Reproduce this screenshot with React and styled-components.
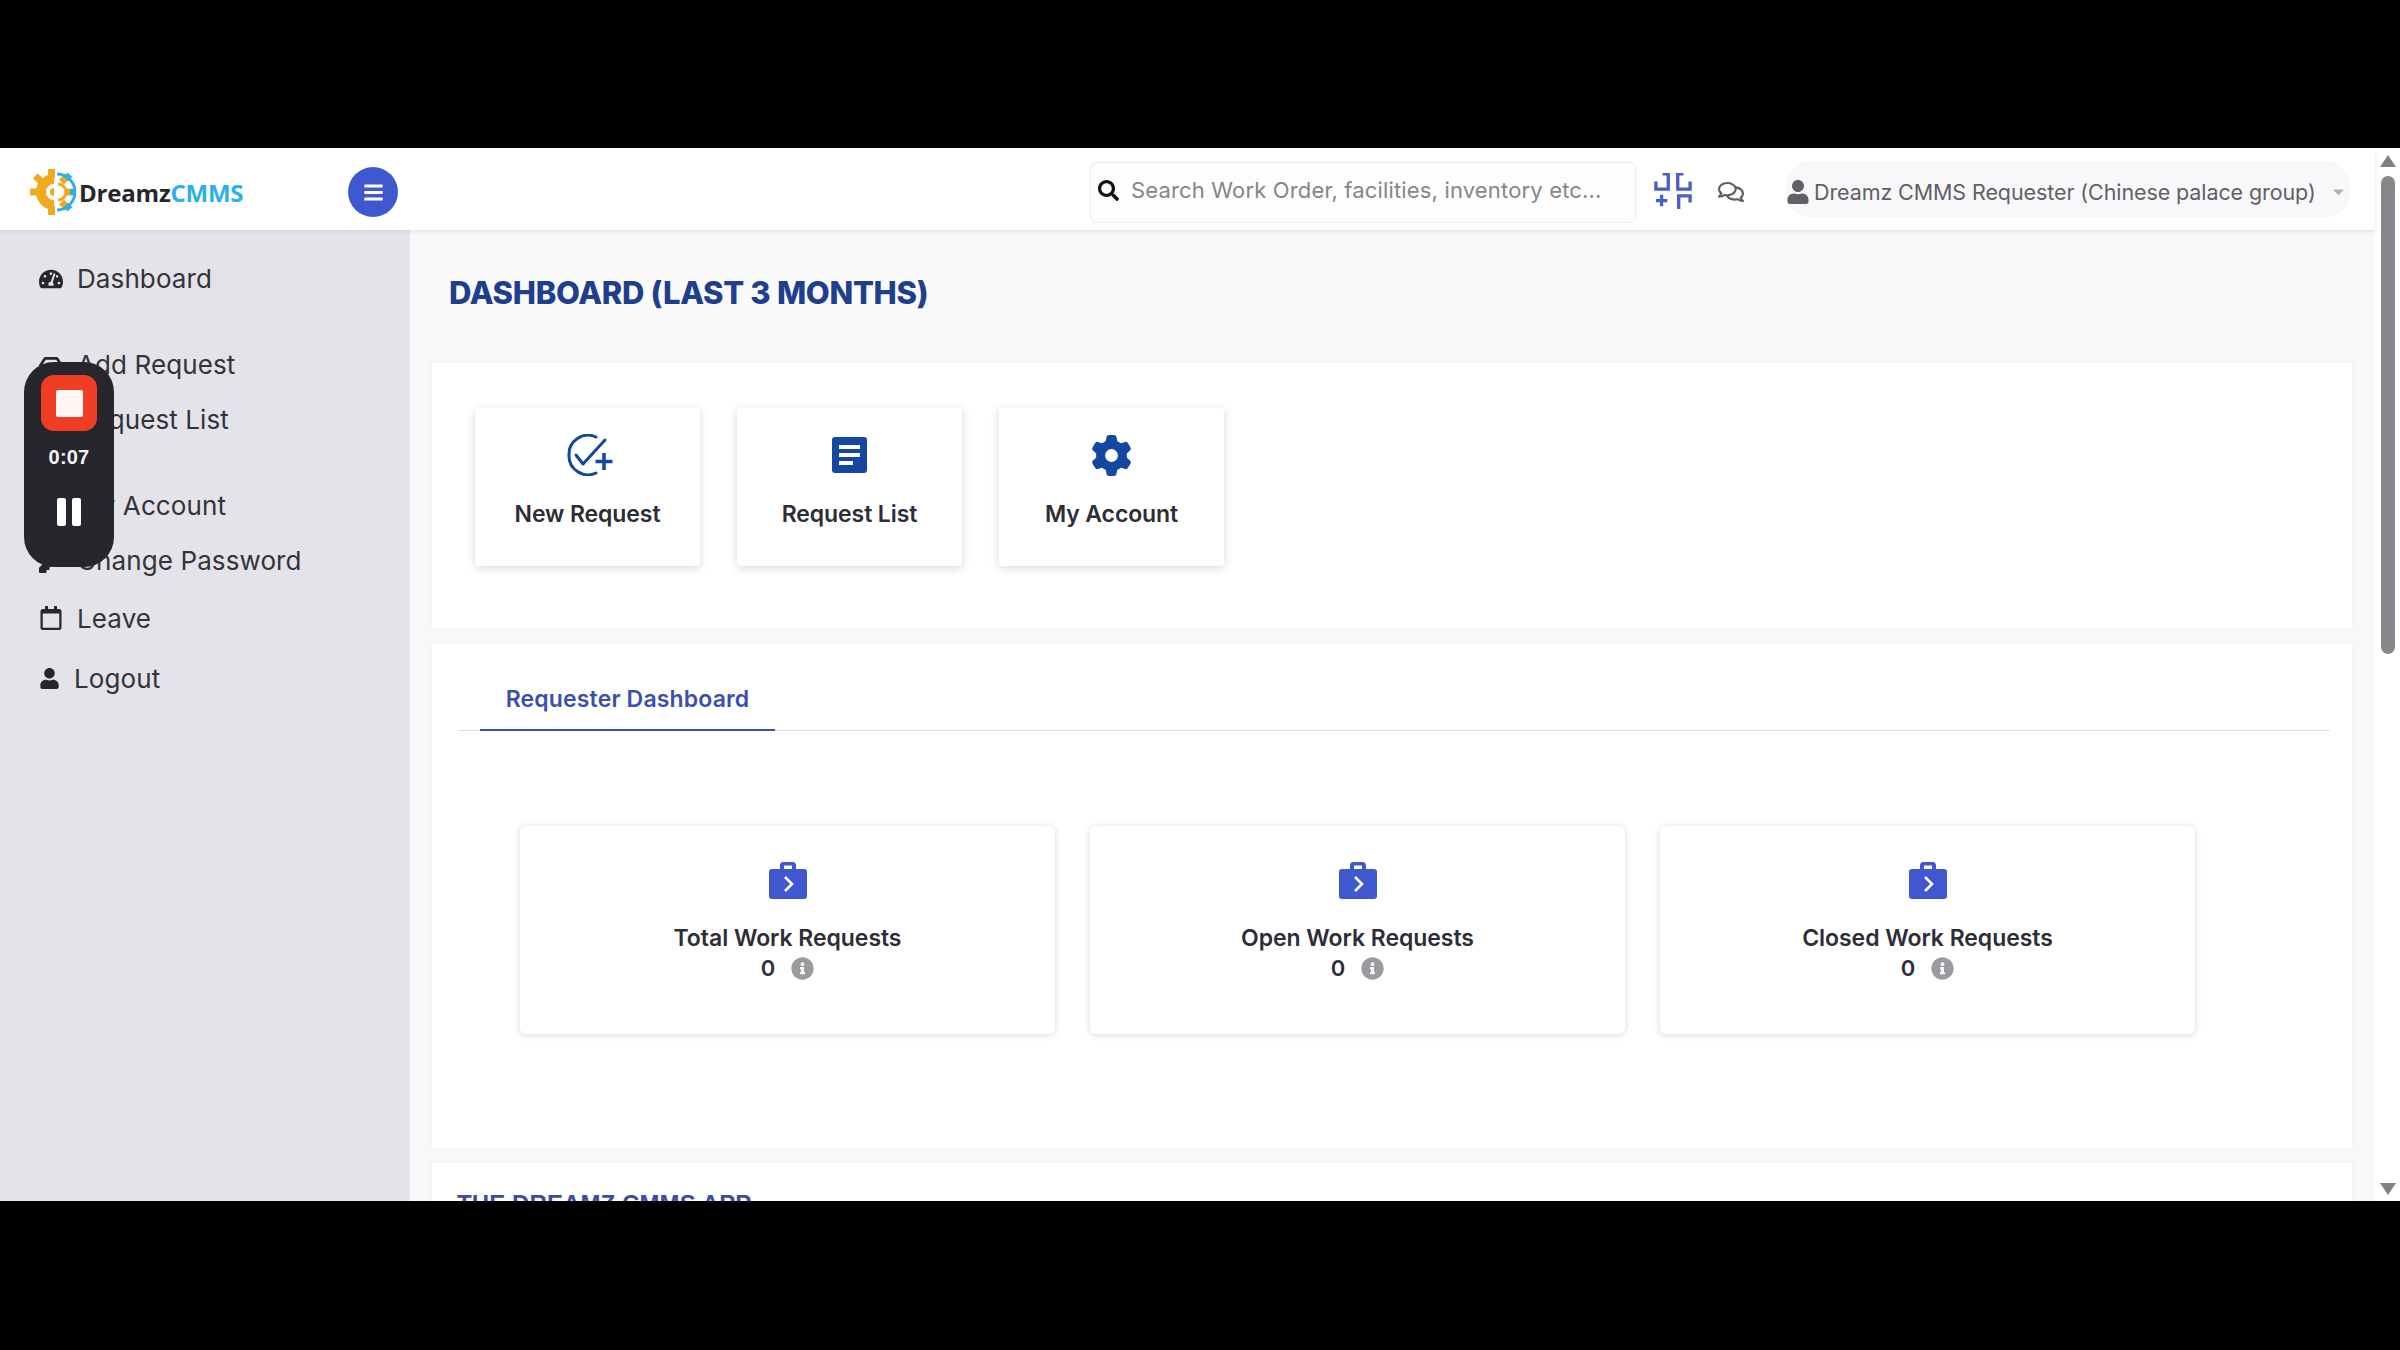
import styled, { createGlobalStyle } from "styled-components";
import {
  FaBars,
  FaCaretDown,
  FaInbox,
  FaInfoCircle,
  FaKey,
  FaRegCalendar,
  FaRegComments,
  FaSearch,
  FaTachometerAlt,
  FaThList,
  FaUser,
} from "react-icons/fa";
import { FaGear } from "react-icons/fa6";

const GlobalStyle = createGlobalStyle`
  html, body {
    margin: 0;
    padding: 0;
    background: #000;
  }
  * {
    box-sizing: border-box;
  }
`;

const Page = styled.div`
  width: 2400px;
  height: 1350px;
  padding-top: 148px;
  background: #000;
  font-family: Inter, "Open Sans", "Liberation Sans", sans-serif;
  overflow: hidden;
`;

const Screen = styled.div`
  position: relative;
  display: flex;
  width: 2400px;
  height: 1053px;
  background: #fff;
  overflow: hidden;
`;

const Content = styled.div`
  display: flex;
  flex-direction: column;
  width: 2375px;
  height: 100%;
`;

const Header = styled.header`
  flex: none;
  display: flex;
  align-items: center;
  height: 82px;
  padding-top: 6px;
  background: #fff;
  box-shadow: 0 1px 4px rgba(40, 40, 60, 0.12);
  position: relative;
  z-index: 2;
`;

const Brand = styled.div`
  flex: none;
  display: flex;
  align-items: center;
  gap: 3px;
  width: 348px;
  padding-left: 30px;
`;

const BrandName = styled.span`
  font-family: "Open Sans", sans-serif;
  font-size: 24px;
  font-weight: 700;
  color: #26262c;
  letter-spacing: -0.2px;

  span {
    color: #2cb0ea;
  }
`;

const MenuButton = styled.button`
  flex: none;
  display: flex;
  align-items: center;
  justify-content: center;
  width: 50px;
  height: 50px;
  padding: 0;
  border: none;
  border-radius: 50%;
  background: #3f57cf;
  color: #fff;
  font-size: 21px;
`;

const SearchBox = styled.div`
  flex: none;
  display: flex;
  align-items: center;
  gap: 12px;
  width: 546px;
  height: 61px;
  margin-left: 692px;
  padding: 0 0 4px 7px;
  border: 1px solid #ececf0;
  border-radius: 6px;
  background: #fdfdfe;
  color: #111;
  font-size: 21px;
`;

const SearchText = styled.span`
  font-size: 22px;
  letter-spacing: 0.16px;
  color: #85858a;
  white-space: nowrap;
`;

const ScanIcon = styled.svg`
  flex: none;
  width: 38px;
  height: 38px;
  margin-left: 18px;
  color: #4a5ec4;
`;

const ChatIcon = styled(FaRegComments)`
  flex: none;
  margin-left: 26px;
  font-size: 26px;
  color: #5d5d62;
`;

const UserPill = styled.div`
  flex: none;
  display: flex;
  align-items: center;
  gap: 4px;
  width: 564px;
  height: 56px;
  margin: -6px 0 0 42px;
  padding-top: 5px;
  border-radius: 24px;
  background: #f8f8fa;
  color: #606065;
  white-space: nowrap;

  svg {
    flex: none;
  }
`;

const UserName = styled.span`
  font-size: 21.5px;
  letter-spacing: -0.1px;
`;

const Caret = styled(FaCaretDown)`
  margin-left: 10px;
  font-size: 17px;
  color: #b0b0b4;
`;

const Body = styled.div`
  flex: 1;
  display: flex;
  min-height: 0;
`;

const Sidebar = styled.nav`
  flex: none;
  width: 410px;
  padding-top: 21px;
  padding-left: 39px;
  background: #e4e3e9;
  color: #33333a;
`;

const NavGroup = styled.div`
  margin-top: ${({ $first }) => ($first ? "0" : "31px")};
`;

const NavRow = styled.div`
  display: flex;
  align-items: center;
  gap: 14px;
  height: ${({ $tall }) => ($tall ? "60px" : "55px")};
  font-size: 26px;
  letter-spacing: 0.1px;

  svg {
    color: #26262c;
  }
`;

const Main = styled.main`
  flex: 1;
  min-width: 0;
  padding: 20px 23px 0 22px;
  background: #f8f8fa;
  overflow: hidden;
`;

const TitleBand = styled.div`
  display: flex;
  align-items: center;
  height: 94px;
  margin-bottom: 19px;
  padding: 0 0 10px 17px;
  background: #fafafb;
`;

const Title = styled.h1`
  margin: 0;
  font-size: 31px;
  font-weight: 800;
  letter-spacing: -0.3px;
  color: #1d3f8e;
`;

const Panel = styled.section`
  background: #fff;
  box-shadow: 0 0 6px rgba(60, 60, 80, 0.05);
`;

const QuickPanel = styled(Panel)`
  display: flex;
  gap: 37px;
  height: 265px;
  padding: 45px 0 0 43px;
`;

const QuickCard = styled.div`
  display: flex;
  flex-direction: column;
  align-items: center;
  width: 225px;
  height: 158px;
  padding-top: 26px;
  border-radius: 4px;
  background: #fff;
  box-shadow: 0 2px 10px rgba(40, 40, 60, 0.18);
  color: #14479f;
`;

const QuickIcon = styled.div`
  display: flex;
  align-items: center;
  justify-content: center;
  height: 42px;
  font-size: 41px;
`;

const NewRequestSvg = styled.svg`
  width: 46px;
  height: 42px;
  margin-left: 4px;
`;

const QuickLabel = styled.div`
  margin-top: 24px;
  font-size: 23px;
  font-weight: 600;
  letter-spacing: -0.1px;
  color: #2d2d36;
`;

const DashPanel = styled(Panel)`
  height: 504px;
  margin-top: 16px;
  padding-top: 30px;
`;

const TabBar = styled.div`
  display: flex;
  height: 57px;
  margin: 0 22px 0 26px;
  border-bottom: 1px solid #dcdce2;
`;

const Tab = styled.div`
  width: 295px;
  margin-left: 22px;
  margin-bottom: -1px;
  padding-top: 11px;
  border-bottom: 2px solid #3d4fae;
  font-size: 23px;
  font-weight: 600;
  letter-spacing: 0.15px;
  text-align: center;
  color: #3d4fae;
`;

const StatRow = styled.div`
  display: flex;
  gap: 35px;
  margin: 95px 0 0 88px;
`;

const StatCard = styled.div`
  display: flex;
  flex-direction: column;
  align-items: center;
  width: 535px;
  height: 208px;
  padding-top: 35px;
  border-radius: 6px;
  background: #fff;
  box-shadow: 0 1px 7px rgba(40, 40, 60, 0.18);
`;

const CaseIcon = styled.svg`
  width: 40px;
  height: 40px;
  color: #3f57cf;
`;

const StatTitle = styled.div`
  margin-top: 22px;
  font-size: 23px;
  font-weight: 600;
  line-height: 30px;
  letter-spacing: -0.05px;
  color: #2d2d38;
`;

const StatCount = styled.div`
  display: flex;
  align-items: center;
  gap: 16px;
  height: 30px;
  font-size: 22px;
  font-weight: 600;
  color: #2d2d38;

  svg {
    font-size: 23px;
    color: #9b9b9f;
  }
`;

const AppPanel = styled(Panel)`
  height: 80px;
  margin-top: 15px;
  padding: 26px 0 0 25px;
`;

const AppHeading = styled.h2`
  margin: 0;
  font-family: "Liberation Sans", Arial, sans-serif;
  font-size: 24px;
  font-weight: 700;
  letter-spacing: 0.1px;
  line-height: 30px;
  color: #3e4aa8;
`;

const Scrollbar = styled.div`
  flex: none;
  display: flex;
  flex-direction: column;
  align-items: center;
  width: 25px;
  padding-top: 7px;
  background: #fff;
`;

const ScrollArrow = styled.div`
  width: 0;
  height: 0;
  border-left: 8px solid transparent;
  border-right: 8px solid transparent;
  border-${({ $down }) => ($down ? "top" : "bottom")}: 12px solid #808084;
  margin-top: ${({ $down }) => ($down ? "529px" : "0")};
`;

const ScrollThumb = styled.div`
  width: 14px;
  height: 478px;
  margin-top: 9px;
  border-radius: 7px;
  background: #88888c;
`;

const Recorder = styled.div`
  position: absolute;
  left: 24px;
  top: 214px;
  display: flex;
  flex-direction: column;
  align-items: center;
  width: 90px;
  height: 205px;
  padding-top: 13px;
  border-radius: 30px;
  background: #26262c;
`;

const StopButton = styled.div`
  display: flex;
  align-items: center;
  justify-content: center;
  width: 56px;
  height: 56px;
  border-radius: 13px;
  background: #f03e25;

  &::after {
    content: "";
    width: 27px;
    height: 27px;
    border-radius: 2px;
    background: #fff6f4;
  }
`;

const RecorderTime = styled.div`
  margin-top: 14px;
  font-family: "Liberation Sans", Arial, sans-serif;
  font-size: 20px;
  font-weight: 700;
  line-height: 24px;
  letter-spacing: 0.2px;
  color: #f4f4f4;
`;

const PauseIcon = styled.div`
  display: flex;
  gap: 6px;
  margin-top: 29px;

  &::before,
  &::after {
    content: "";
    width: 9px;
    height: 28px;
    border-radius: 2px;
    background: #fff;
  }
`;

const LogoMark = () => {
  const teeth = [90, 135, 180, 225, 270, 315, 0];
  return (
    <svg width="46" height="46" viewBox="0 0 46 46">
      {teeth.map((a) => (
        <rect key={a} x="18" y="0" width="7" height="9" fill="#efaa1f" transform={`rotate(${a + 180} 21.5 23)`} />
      ))}
      <path d="M24 5 A18 18 0 1 0 24 41 Z" fill="#efaa1f" />
      <path d="M24 15 a8 8 0 0 0 0 16 h1 v-4 h-1 a4 4 0 0 1 0 -8 h1 v-4 Z" fill="#fff" />
      <path d="M27 5 A18 18 0 0 1 27 41" fill="none" stroke="#2cb0ea" strokeWidth="3" />
      <rect x="35" y="5" width="6" height="6" fill="#2cb0ea" transform="rotate(40 38 8)" />
      <rect x="40" y="20" width="6" height="6" fill="#2cb0ea" />
      <rect x="35" y="35" width="6" height="6" fill="#2cb0ea" transform="rotate(-40 38 38)" />
      <path d="M28 15 A8 8 0 0 1 28 31" fill="none" stroke="#efaa1f" strokeWidth="3" />
    </svg>
  );
};

const NewRequestIcon = () => (
  <NewRequestSvg viewBox="0 0 46 42" fill="none" stroke="currentColor" strokeWidth="3">
    <path d="M29 3 A19 19 0 0 0 2 21 A19 19 0 0 0 29 39" strokeLinecap="round" />
    <path d="M9 21 L16 30 L38 6" strokeLinecap="round" strokeLinejoin="round" />
    <path d="M37 19 V36 M28.5 27.5 H45.5" strokeWidth="3.5" />
  </NewRequestSvg>
);

const RequestListIcon = () => (
  <svg width="36" height="36" viewBox="0 0 36 36">
    <rect width="35" height="36" rx="3" fill="currentColor" />
    <path d="M7 8 H28 V12 H7 Z M7 16 H28 V20 H7 Z M7 24 H21 V28 H7 Z" fill="#fff" />
  </svg>
);

const BriefcaseIcon = () => (
  <CaseIcon viewBox="0 0 40 40">
    <path
      d="M12 8 V4.5 A3.5 3.5 0 0 1 15.5 1 H24.5 A3.5 3.5 0 0 1 28 4.5 V8 H36 A3 3 0 0 1 39 11 V35 A3 3 0 0 1 36 38 H4 A3 3 0 0 1 1 35 V11 A3 3 0 0 1 4 8 Z M16 4.5 V8 H24 V4.5 Z"
      fill="currentColor"
      fillRule="evenodd"
    />
    <path d="M17 16 L24 23 L17 30" fill="none" stroke="#fff" strokeWidth="2.6" />
  </CaseIcon>
);

const StatItem = ({ label }) => (
  <StatCard>
    <BriefcaseIcon />
    <StatTitle>{label}</StatTitle>
    <StatCount>
      0
      <FaInfoCircle />
    </StatCount>
  </StatCard>
);

const App = () => (
  <>
    <GlobalStyle />
    <Page>
      <Screen>
        <Content>
          <Header>
            <Brand>
              <LogoMark />
              <BrandName>
                Dreamz<span>CMMS</span>
              </BrandName>
            </Brand>
            <MenuButton>
              <FaBars />
            </MenuButton>
            <SearchBox>
              <FaSearch />
              <SearchText>Search Work Order, facilities, inventory etc...</SearchText>
            </SearchBox>
            <ScanIcon viewBox="0 0 40 40" fill="none" stroke="currentColor" strokeWidth="3.5">
              <path d="M2 9 V17 H15 V1 H9 M38 9 V17 H25 V1 H31" />
              <path d="M2 29 H14 M8 23 V35 M26 38 V24 H38 V31" />
            </ScanIcon>
            <ChatIcon />
            <UserPill>
              <FaUser size={24} />
              <UserName>Dreamz CMMS Requester (Chinese palace group)</UserName>
              <Caret />
            </UserPill>
          </Header>
          <Body>
            <Sidebar>
              <NavGroup $first>
                <NavRow>
                  <FaTachometerAlt size={24} />
                  Dashboard
                </NavRow>
              </NavGroup>
              <NavGroup>
                <NavRow>
                  <FaInbox size={24} />
                  Add Request
                </NavRow>
                <NavRow>
                  <FaThList size={24} />
                  Request List
                </NavRow>
              </NavGroup>
              <NavGroup>
                <NavRow>
                  <FaUser size={24} />
                  My Account
                </NavRow>
                <NavRow>
                  <FaKey size={24} />
                  Change Password
                </NavRow>
                <NavRow $tall>
                  <FaRegCalendar size={24} />
                  Leave
                </NavRow>
                <NavRow $tall>
                  <FaUser size={21} />
                  Logout
                </NavRow>
              </NavGroup>
            </Sidebar>
            <Main>
              <TitleBand>
                <Title>DASHBOARD (LAST 3 MONTHS)</Title>
              </TitleBand>
              <QuickPanel>
                <QuickCard>
                  <QuickIcon>
                    <NewRequestIcon />
                  </QuickIcon>
                  <QuickLabel>New Request</QuickLabel>
                </QuickCard>
                <QuickCard>
                  <QuickIcon>
                    <RequestListIcon />
                  </QuickIcon>
                  <QuickLabel>Request List</QuickLabel>
                </QuickCard>
                <QuickCard>
                  <QuickIcon>
                    <FaGear />
                  </QuickIcon>
                  <QuickLabel>My Account</QuickLabel>
                </QuickCard>
              </QuickPanel>
              <DashPanel>
                <TabBar>
                  <Tab>Requester Dashboard</Tab>
                </TabBar>
                <StatRow>
                  <StatItem label="Total Work Requests" />
                  <StatItem label="Open Work Requests" />
                  <StatItem label="Closed Work Requests" />
                </StatRow>
              </DashPanel>
              <AppPanel>
                <AppHeading>THE DREAMZ CMMS APP</AppHeading>
              </AppPanel>
            </Main>
          </Body>
        </Content>
        <Scrollbar>
          <ScrollArrow />
          <ScrollThumb />
          <ScrollArrow $down />
        </Scrollbar>
        <Recorder>
          <StopButton />
          <RecorderTime>0:07</RecorderTime>
          <PauseIcon />
        </Recorder>
      </Screen>
    </Page>
  </>
);

export default App;
